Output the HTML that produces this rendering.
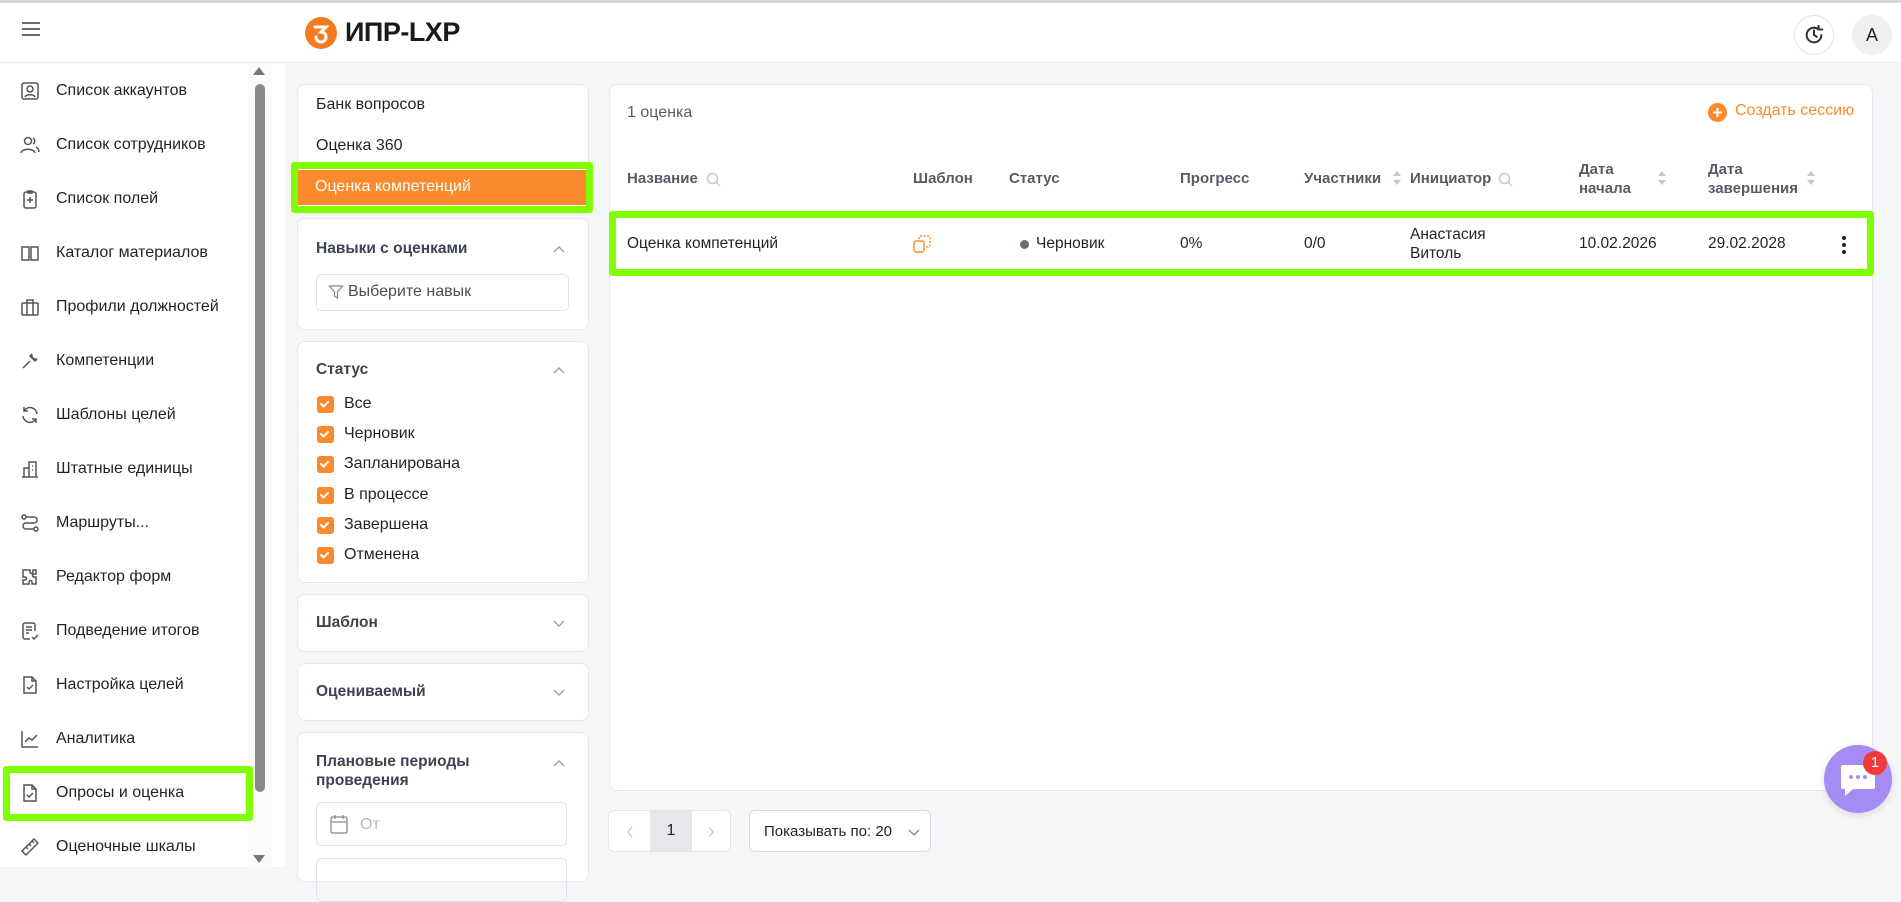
<!DOCTYPE html>
<html><head><meta charset="utf-8"><style>
*{box-sizing:border-box;margin:0;padding:0}
body{width:1901px;height:867px;overflow:hidden;background:#f5f6f8;font-family:"Liberation Sans","Noto Sans CJK SC",sans-serif;font-size:16px;color:#1f2329;position:relative}
.a{position:absolute}
.hdr{left:0;top:0;width:1901px;height:63px;background:#fff;border-top:3px solid #d9d9d9;border-bottom:1px solid #e8e9ec}
.side{left:0;top:64px;width:285px;height:803px;background:#fff}
.it{position:absolute;left:0;height:30px;display:flex;align-items:center;white-space:nowrap}
.it svg{position:absolute;left:20px;width:20px;height:20px}
.it span{position:absolute;left:56px}
.card{position:absolute;background:#fff;border:1px solid #e6e8eb;border-radius:8px}
.ttl{position:absolute;left:18px;color:#3d4450;font-weight:bold;font-size:15.5px}
.chev{position:absolute;right:22px;width:14px;height:14px}
.cb{position:absolute;left:19px;width:17px;height:17px;background:#fb8a2e;border-radius:3px}
.cl{position:absolute;left:46px}
.th{position:absolute;color:#555c66;font-weight:bold;font-size:15px}
.td{position:absolute;font-size:15.5px}
.green{position:absolute;border:7px solid #7fff00;border-radius:3px}
</style></head><body>
<div class="a hdr">
 <svg class="a" style="left:21px;top:18px" width="20" height="16" viewBox="0 0 20 16"><path d="M1 2h18M1 8h18M1 14h18" stroke="#555" stroke-width="1.8"/></svg>
 <svg class="a" style="left:305px;top:14px" width="32" height="32" viewBox="0 0 32 32"><circle cx="16" cy="16" r="16" fill="#f47b20"/><path d="M10 10h11l-5 5a5 5 0 1 1-5 5" fill="none" stroke="#fff" stroke-width="3" stroke-linecap="round"/></svg>
 <div class="a" style="left:345px;top:14px;font-size:27px;font-weight:bold;color:#1a1a1a;letter-spacing:-0.5px">ИПР-LXP</div>
 <div class="a" style="left:1794px;top:12px;width:40px;height:40px;border-radius:50%;border:1px solid #e3e4e6;background:#fff"></div>
 <svg class="a" style="left:1803px;top:21px" width="22" height="22" viewBox="0 0 24 24"><path d="M20 12a8 8 0 1 1-3-6.2M17 2v4h4" fill="none" stroke="#333" stroke-width="2.2" stroke-linecap="round"/><path d="M12 7v5l3 2" fill="none" stroke="#333" stroke-width="2.2" stroke-linecap="round"/></svg>
 <div class="a" style="left:1852px;top:12px;width:40px;height:40px;border-radius:50%;background:#eef0f2;text-align:center;line-height:40px;font-size:18px;color:#222">A</div>
</div>
<div class="a side">
 <div class="a" style="left:248px;top:0;width:24px;height:803px;background:#fbfbfb"></div>
 <svg class="a" style="left:253px;top:2px" width="12" height="10"><path d="M0 9L6 1L12 9Z" fill="#777"/></svg>
 <div class="a" style="left:255px;top:20px;width:10px;height:708px;background:#8a8a8a;border-radius:5px"></div>
 <svg class="a" style="left:253px;top:790px" width="12" height="10"><path d="M0 1L6 9L12 1Z" fill="#777"/></svg>
</div>
<div class="a" style="left:0;top:0;width:245px;height:867px">
 <div class="it" style="top:76px"><svg viewBox="0 0 20 20" fill="none" stroke="#555" stroke-width="1.5"><rect x="2" y="2" width="16" height="16" rx="2"/><circle cx="10" cy="8" r="3"/><path d="M5 16c1-3 9-3 10 0"/></svg><span>Список аккаунтов</span></div>
 <div class="it" style="top:130px"><svg viewBox="0 0 20 20" fill="none" stroke="#555" stroke-width="1.5"><circle cx="8" cy="6" r="3.5"/><path d="M1 18c1-5 13-5 14 0M13 3a3.5 3.5 0 0 1 0 6M16 12c2 1 3 3 3 5"/></svg><span>Список сотрудников</span></div>
 <div class="it" style="top:184px"><svg viewBox="0 0 20 20" fill="none" stroke="#555" stroke-width="1.5"><rect x="4" y="3" width="12" height="16" rx="2"/><path d="M8 2h4v2H8zM10 8v6M7 11h6"/></svg><span>Список полей</span></div>
 <div class="it" style="top:238px"><svg viewBox="0 0 20 20" fill="none" stroke="#555" stroke-width="1.5"><path d="M2 4h7v13H2zM11 4h7v13h-7z"/></svg><span>Каталог материалов</span></div>
 <div class="it" style="top:292px"><svg viewBox="0 0 20 20" fill="none" stroke="#555" stroke-width="1.5"><rect x="2" y="6" width="16" height="12" rx="1"/><path d="M7 6V3h6v3M7 6v12M13 6v12"/></svg><span>Профили должностей</span></div>
 <div class="it" style="top:346px"><svg viewBox="0 0 20 20" fill="none" stroke="#555" stroke-width="1.5"><path d="M3 17l7-7M12 3a4 4 0 0 0 5 5l-2 2-5-5z"/></svg><span>Компетенции</span></div>
 <div class="it" style="top:400px"><svg viewBox="0 0 20 20" fill="none" stroke="#555" stroke-width="1.5"><path d="M17 9a7 7 0 0 0-13-3M3 11a7 7 0 0 0 13 3M4 2v4h4M16 18v-4h-4"/></svg><span>Шаблоны целей</span></div>
 <div class="it" style="top:454px"><svg viewBox="0 0 20 20" fill="none" stroke="#555" stroke-width="1.5"><path d="M2 18h16M4 18V9h5v9M9 18V3h7v15M12 7h1M12 11h1"/></svg><span>Штатные единицы</span></div>
 <div class="it" style="top:508px"><svg viewBox="0 0 20 20" fill="none" stroke="#555" stroke-width="1.5"><circle cx="4" cy="4" r="2"/><circle cx="16" cy="16" r="2"/><path d="M6 4h8a3 3 0 0 1 0 6H6a3 3 0 0 0 0 6h8"/></svg><span>Маршруты...</span></div>
 <div class="it" style="top:562px"><svg viewBox="0 0 20 20" fill="none" stroke="#555" stroke-width="1.5"><path d="M7 3h3v2a1.5 1.5 0 0 0 3 0V3h3v4h-2a1.5 1.5 0 0 0 0 3h2v7h-4v-2a1.5 1.5 0 0 0-3 0v2H3v-4h2a1.5 1.5 0 0 0 0-3H3V3z"/></svg><span>Редактор форм</span></div>
 <div class="it" style="top:616px"><svg viewBox="0 0 20 20" fill="none" stroke="#555" stroke-width="1.5"><path d="M15 10V4a2 2 0 0 0-2-2H5a2 2 0 0 0-2 2v12a2 2 0 0 0 2 2h5M6 6h6M6 9h6M6 12h3M12 16l2 2 4-4"/></svg><span>Подведение итогов</span></div>
 <div class="it" style="top:670px"><svg viewBox="0 0 20 20" fill="none" stroke="#555" stroke-width="1.5"><path d="M4 2h8l4 4v12H4zM12 2v4h4M7 12l2 2 4-4"/></svg><span>Настройка целей</span></div>
 <div class="it" style="top:724px"><svg viewBox="0 0 20 20" fill="none" stroke="#555" stroke-width="1.5"><path d="M2 2v16h16M5 13l4-4 3 2 5-5"/></svg><span>Аналитика</span></div>
 <div class="it" style="top:778px"><svg viewBox="0 0 20 20" fill="none" stroke="#555" stroke-width="1.5"><path d="M4 2h8l4 4v12H4zM12 2v4h4M7 12l2 2 4-4"/></svg><span>Опросы и оценка</span></div>
 <div class="it" style="top:832px"><svg viewBox="0 0 20 20" fill="none" stroke="#555" stroke-width="1.5"><path d="M2 14L14 2l4 4L6 18zM6 10l2 2M9 7l2 2M12 4l2 2"/></svg><span>Оценочные шкалы</span></div>
</div>
<div class="green" style="left:3px;top:766px;width:250px;height:55px"></div>

<div class="card" style="left:297px;top:84px;width:292px;height:130px">
 <div class="a" style="left:18px;top:11px">Банк вопросов</div>
 <div class="a" style="left:18px;top:52px">Оценка 360</div>
</div>
<div class="a" style="left:297px;top:170px;width:292px;height:35px;background:#fb8a2e"></div>
<div class="a" style="left:315px;top:178px;color:#fff">Оценка компетенций</div>
<div class="green" style="left:291px;top:162px;width:302px;height:51px"></div>

<div class="card" style="left:297px;top:218px;width:292px;height:112px">
 <div class="ttl" style="top:21px">Навыки с оценками</div>
 <svg class="chev" style="top:24px" viewBox="0 0 14 14"><path d="M2 9l5-5 5 5" fill="none" stroke="#9aa0a8" stroke-width="1.4"/></svg>
 <div class="a" style="left:18px;top:55px;width:253px;height:37px;border:1px solid #dfe2e6;border-radius:5px"></div>
 <svg class="a" style="left:30px;top:65px" width="16" height="16" viewBox="0 0 16 16"><path d="M1.5 2h13l-5 6v6l-3-2V8z" fill="none" stroke="#888" stroke-width="1.2"/></svg>
 <div class="a" style="left:50px;top:64px;color:#4a4f57">Выберите навык</div>
</div>

<div class="card" style="left:297px;top:341px;width:292px;height:242px">
 <div class="ttl" style="top:19px">Статус</div>
 <svg class="chev" style="top:22px" viewBox="0 0 14 14"><path d="M2 9l5-5 5 5" fill="none" stroke="#9aa0a8" stroke-width="1.4"/></svg>
 <div class="cb" style="top:54px"></div><div class="cl" style="top:53px">Все</div>
 <div class="cb" style="top:84px"></div><div class="cl" style="top:83px">Черновик</div>
 <div class="cb" style="top:114px"></div><div class="cl" style="top:113px">Запланирована</div>
 <div class="cb" style="top:145px"></div><div class="cl" style="top:144px">В процессе</div>
 <div class="cb" style="top:175px"></div><div class="cl" style="top:174px">Завершена</div>
 <div class="cb" style="top:205px"></div><div class="cl" style="top:204px">Отменена</div>
</div>
<svg class="a" style="left:316px;top:395px" width="17" height="170" viewBox="0 0 17 170"><g fill="none" stroke="#fff" stroke-width="2" stroke-linecap="round"><path d="M5 9l2.5 2.5 4.5-4.5"/><path d="M5 39l2.5 2.5 4.5-4.5"/><path d="M5 69l2.5 2.5 4.5-4.5"/><path d="M5 100l2.5 2.5 4.5-4.5"/><path d="M5 130l2.5 2.5 4.5-4.5"/><path d="M5 160l2.5 2.5 4.5-4.5"/></g></svg>

<div class="card" style="left:297px;top:594px;width:292px;height:58px">
 <div class="ttl" style="top:19px">Шаблон</div>
 <svg class="chev" style="top:21px" viewBox="0 0 14 14"><path d="M2 5l5 5 5-5" fill="none" stroke="#9aa0a8" stroke-width="1.4"/></svg>
</div>
<div class="card" style="left:297px;top:663px;width:292px;height:58px">
 <div class="ttl" style="top:19px">Оцениваемый</div>
 <svg class="chev" style="top:21px" viewBox="0 0 14 14"><path d="M2 5l5 5 5-5" fill="none" stroke="#9aa0a8" stroke-width="1.4"/></svg>
</div>
<div class="card" style="left:297px;top:732px;width:292px;height:150px">
 <div class="ttl" style="top:19px;line-height:19px">Плановые периоды<br>проведения</div>
 <svg class="chev" style="top:24px" viewBox="0 0 14 14"><path d="M2 9l5-5 5 5" fill="none" stroke="#9aa0a8" stroke-width="1.4"/></svg>
 <div class="a" style="left:18px;top:69px;width:251px;height:44px;border:1px solid #dfe2e6;border-radius:5px"></div>
 <svg class="a" style="left:32px;top:81px" width="18" height="20" viewBox="0 0 18 20"><rect x="1" y="3" width="16" height="16" rx="1.5" fill="none" stroke="#888" stroke-width="1.3"/><path d="M1 8h16M5 1v4M13 1v4" stroke="#888" stroke-width="1.3"/></svg>
 <div class="a" style="left:62px;top:83px;color:#b5b9bf">От</div>
 <div class="a" style="left:18px;top:125px;width:251px;height:44px;border:1px solid #dfe2e6;border-radius:5px"></div>
</div>

<div class="card" style="left:609px;top:84px;width:1264px;height:707px"></div>
<div class="a" style="left:627px;top:104px;color:#555c66">1 оценка</div>
<div class="a" style="left:1708px;top:103px;width:19px;height:19px;border-radius:50%;background:#fb8a2e"></div>
<svg class="a" style="left:1708px;top:103px" width="19" height="19"><path d="M9.5 5v9M5 9.5h9" stroke="#fff" stroke-width="2"/></svg>
<div class="a" style="left:1735px;top:102px;color:#fb8a2e;font-size:16px">Создать сессию</div>

<div class="th" style="left:627px;top:170px">Название</div>
<svg class="a" style="left:706px;top:172px" width="15" height="15" viewBox="0 0 15 15"><circle cx="6.5" cy="6.5" r="5" fill="none" stroke="#c4c8cd" stroke-width="1.5"/><path d="M10 10l4 4" stroke="#c4c8cd" stroke-width="1.5"/></svg>
<div class="th" style="left:913px;top:170px">Шаблон</div>
<div class="th" style="left:1009px;top:170px">Статус</div>
<div class="th" style="left:1180px;top:170px">Прогресс</div>
<div class="th" style="left:1304px;top:170px">Участники</div>
<svg class="a" style="left:1392px;top:170px" width="10" height="16"><path d="M1 6l4-5 4 5zM1 10l4 5 4-5z" fill="#c4c8cd"/></svg>
<div class="th" style="left:1410px;top:170px">Инициатор</div>
<svg class="a" style="left:1498px;top:172px" width="15" height="15" viewBox="0 0 15 15"><circle cx="6.5" cy="6.5" r="5" fill="none" stroke="#c4c8cd" stroke-width="1.5"/><path d="M10 10l4 4" stroke="#c4c8cd" stroke-width="1.5"/></svg>
<div class="th" style="left:1579px;top:160px;line-height:19px">Дата<br>начала</div>
<svg class="a" style="left:1657px;top:170px" width="10" height="16"><path d="M1 6l4-5 4 5zM1 10l4 5 4-5z" fill="#c4c8cd"/></svg>
<div class="th" style="left:1708px;top:160px;line-height:19px">Дата<br>завершения</div>
<svg class="a" style="left:1806px;top:170px" width="10" height="16"><path d="M1 6l4-5 4 5zM1 10l4 5 4-5z" fill="#c4c8cd"/></svg>

<div class="td" style="left:627px;top:235px">Оценка компетенций</div>
<svg class="a" style="left:913px;top:235px" width="18" height="18" viewBox="0 0 18 18"><rect x="1" y="6" width="10" height="11" rx="2" fill="none" stroke="#fb8a2e" stroke-width="1.4"/><path d="M6 4V2.5A1.5 1.5 0 0 1 7.5 1h8A1.5 1.5 0 0 1 17 2.5v8a1.5 1.5 0 0 1-1.5 1.5H13" fill="none" stroke="#fb8a2e" stroke-width="1.4" stroke-dasharray="2 1.5"/></svg>
<div class="a" style="left:1020px;top:240px;width:9px;height:9px;border-radius:50%;background:#6b7079"></div>
<div class="td" style="left:1036px;top:235px">Черновик</div>
<div class="td" style="left:1180px;top:235px">0%</div>
<div class="td" style="left:1304px;top:235px">0/0</div>
<div class="td" style="left:1410px;top:225px;line-height:19px">Анастасия<br>Витоль</div>
<div class="td" style="left:1579px;top:235px">10.02.2026</div>
<div class="td" style="left:1708px;top:235px">29.02.2028</div>
<svg class="a" style="left:1840px;top:235px" width="8" height="20"><circle cx="4" cy="3" r="2" fill="#222"/><circle cx="4" cy="10" r="2" fill="#222"/><circle cx="4" cy="17" r="2" fill="#222"/></svg>
<div class="green" style="left:609px;top:211px;width:1265px;height:65px"></div>

<div class="a" style="left:608px;top:810px;width:123px;height:42px;background:#fff;border:1px solid #e3e5e8;border-radius:6px;overflow:hidden">
 <div class="a" style="left:41px;top:0;width:42px;height:42px;background:#e5e7eb;text-align:center;line-height:40px;font-size:16px">1</div>
 <svg class="a" style="left:17px;top:15px" width="8" height="12"><path d="M6 1L2 6l4 5" fill="none" stroke="#c4c8cd" stroke-width="1.3"/></svg>
 <svg class="a" style="left:98px;top:15px" width="8" height="12"><path d="M2 1l4 5-4 5" fill="none" stroke="#c4c8cd" stroke-width="1.3"/></svg>
</div>
<div class="a" style="left:749px;top:810px;width:182px;height:42px;background:#fff;border:1px solid #d9dce0;border-radius:6px">
 <div class="a" style="left:14px;top:12px;font-size:15px;white-space:nowrap">Показывать по: 20</div>
 <svg class="a" style="left:158px;top:16px" width="12" height="10"><path d="M1 3l5 5 5-5" fill="none" stroke="#888" stroke-width="1.3"/></svg>
</div>

<div class="a" style="left:1824px;top:745px;width:68px;height:68px;border-radius:50%;background:#a78bf5;box-shadow:0 2px 8px rgba(0,0,0,.12)"></div>
<svg class="a" style="left:1840px;top:764px" width="36" height="34" viewBox="0 0 36 34"><path d="M3 1h30a2 2 0 0 1 2 2v20a2 2 0 0 1-2 2H13l-8 7v-7H3a2 2 0 0 1-2-2V3a2 2 0 0 1 2-2z" fill="#fff"/><circle cx="11" cy="13" r="2" fill="#a78bf5"/><circle cx="18" cy="13" r="2" fill="#a78bf5"/><circle cx="25" cy="13" r="2" fill="#a78bf5"/></svg>
<div class="a" style="left:1863px;top:751px;width:24px;height:24px;border-radius:50%;background:#ef3b3b;color:#fff;text-align:center;line-height:24px;font-size:15px">1</div>
</body></html>
